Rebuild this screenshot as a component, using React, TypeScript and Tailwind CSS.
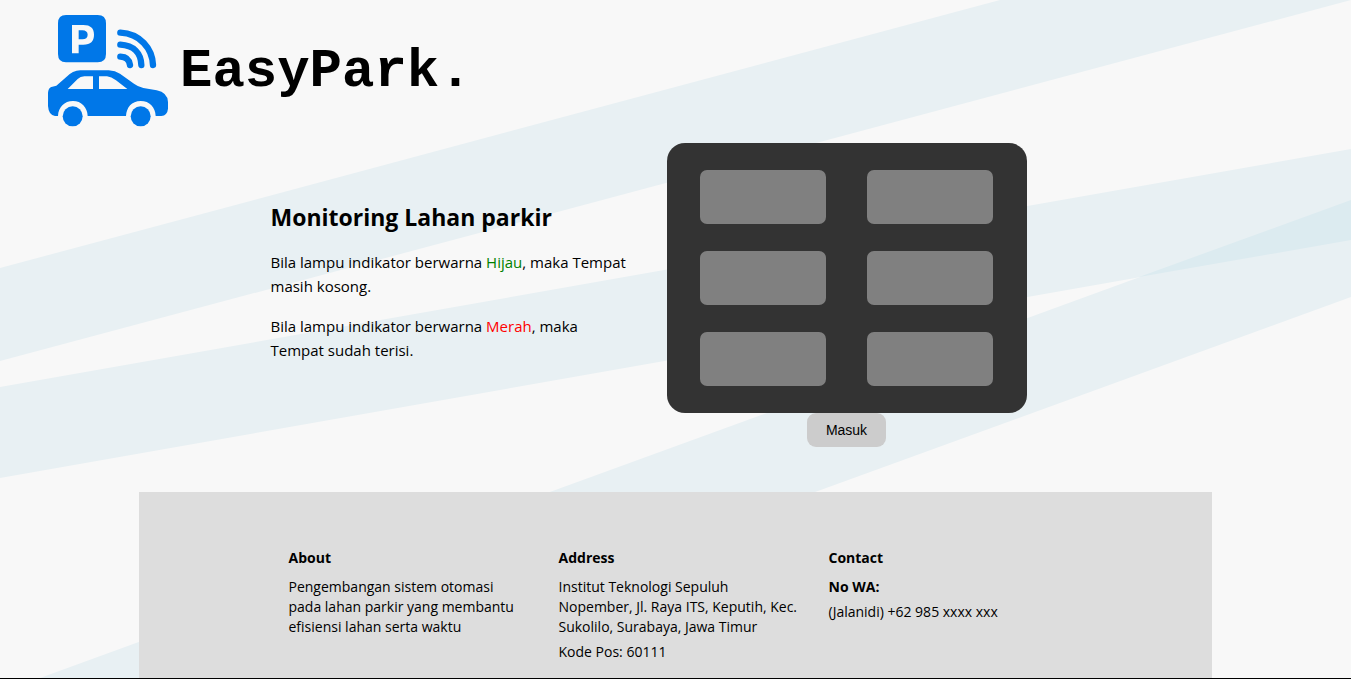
const slots = ["A1", "B1", "A2", "B2", "A3", "B3"];

function Stripes() {
  return (
    <svg
      className="absolute inset-0 -z-10 h-full w-full"
      viewBox="0 0 1351 678"
      preserveAspectRatio="none"
      aria-hidden="true"
    >
      <g fill="#e8f0f3">
        <polygon points="0,268 1000,0 1351,0 0,361" />
        <polygon points="0,387 1351,149 1351,240 0,478" />
        <polygon points="40,678 1351,200 1351,297 304,678" />
      </g>
      <polygon fill="#dcebf0" points="1139,277 1351,200 1351,240" />
    </svg>
  );
}

function Logo() {
  return (
    <svg className="h-[140px] w-[120px] shrink-0" viewBox="54 0 360 420" role="img" aria-label="EasyPark">
      <g fill="#0077e8">
        <path
          fillRule="evenodd"
          d="M108 45H203Q228 45 228 70V162Q228 187 203 187H108Q84 187 84 162V70Q84 45 108 45ZM126 75V160H146V134H160C182 134 192 123 192 104C192 85 182 75 160 75ZM146 91H157C167 91 173 96 173 104C173 113 167 118 157 118H146Z"
        />
        <path
          fillRule="evenodd"
          d="M54 278Q55 265 64 261L79 257L109 231Q128 212 151 211H236Q256 212 270 221L312 251Q324 260 340 264L380 271Q413 278 414 306V326Q412 346 394 348H377C376 322 359 303 332 303C305 303 289 323 288 348H173C172 322 154 303 129 303C103 303 85 322 84 348H75Q56 346 54 318ZM113 267H189V229H163Q151 230 143 237ZM207 229V267H292L258 241Q244 230 231 229Z"
        />
        <circle cx="128" cy="349" r="30" />
        <circle cx="332" cy="349" r="30" />
      </g>
      <g fill="none" stroke="#0077e8" strokeWidth="19" strokeLinecap="round">
        <path d="M271 170Q297 171 300 195" />
        <path d="M271 134C311 136 333 160 334 195" />
        <path d="M271 98C330 101 367 145 369 195" />
      </g>
    </svg>
  );
}

export default function App() {
  return (
    <div className="relative isolate flex min-h-screen flex-col border-b border-black bg-[#f8f8f8] font-['Segoe_UI','Open_Sans',sans-serif] text-black">
      <Stripes />
      <header className="flex h-[143px] items-start gap-3 px-12">
        <Logo />
        <h1 className="pt-10 font-['Courier_New','Liberation_Mono',monospace] text-[54px] leading-[64px] font-bold">
          EasyPark.
        </h1>
      </header>

      <main className="mx-auto flex w-full max-w-[810px] gap-9">
        <section className="w-[360px] pt-14">
          <h2 className="mb-[15px] text-[23px] leading-9 font-bold">Monitoring Lahan parkir</h2>
          <p className="mb-4 text-[15px] leading-6">
            Bila lampu indikator berwarna <span className="text-[#008000]">Hijau</span>, maka Tempat
            <br />
            masih kosong.
          </p>
          <p className="text-[15px] leading-6">
            Bila lampu indikator berwarna <span className="text-[#ff0000]">Merah</span>, maka
            <br />
            Tempat sudah terisi.
          </p>
        </section>
        <section className="flex w-[360px] flex-col items-center">
          <div className="grid w-full grid-cols-2 gap-x-[41px] gap-y-[27px] rounded-[18px] bg-[#333333] py-[27px] pr-[34px] pl-[33px]">
            {slots.map((slot) => (
              <div key={slot} className="h-[54px] rounded-[7px] bg-[#808080]" />
            ))}
          </div>
          <button
            type="button"
            className="h-[34px] rounded-[9px] bg-[#cccccc] px-[19px] font-['Liberation_Sans',Arial,sans-serif] text-[14px]"
          >
            Masuk
          </button>
        </section>
      </main>

      <footer className="mx-auto mt-[45px] w-full max-w-[1073px] flex-1 bg-[#dddddd] pt-14 text-[14px] leading-5">
        <div className="mx-auto grid max-w-[810px] grid-cols-3">
          <section className="pl-[18px]">
            <h3 className="mb-[9px] font-bold">About</h3>
            <p>
              Pengembangan sistem otomasi
              <br />
              pada lahan parkir yang membantu
              <br />
              efisiensi lahan serta waktu
            </p>
          </section>
          <section className="pl-[18px]">
            <h3 className="mb-[9px] font-bold">Address</h3>
            <p className="mb-[5px]">
              Institut Teknologi Sepuluh
              <br />
              Nopember, Jl. Raya ITS, Keputih, Kec.
              <br />
              Sukolilo, Surabaya, Jawa Timur
            </p>
            <p>Kode Pos: 60111</p>
          </section>
          <section className="pl-[18px]">
            <h3 className="mb-[9px] font-bold">Contact</h3>
            <p className="mb-[5px] font-bold">No WA:</p>
            <p>(Jalanidi) +62 985 xxxx xxx</p>
          </section>
        </div>
      </footer>
    </div>
  );
}
